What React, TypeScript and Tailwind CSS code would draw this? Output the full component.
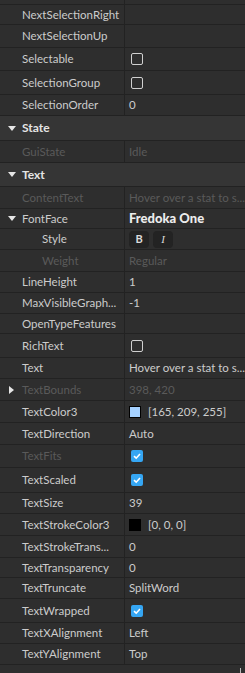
import React from "react";

type Row =
  | { kind: "header"; label: string; h: string }
  | {
      kind: "prop";
      label: string;
      h: string;
      value?: React.ReactNode;
      dim?: boolean;
      indent?: boolean;
      arrow?: "down" | "right";
    };

const Check = ({ on }: { on?: boolean }) =>
  on ? (
    <span className="ml-[2px] flex h-[12px] w-[12px] items-center justify-center rounded-[2px] bg-[#35a6f3]">
      <svg viewBox="0 0 10 10" className="h-[10px] w-[10px]">
        <path d="M2 5.2 L4.2 7.2 L8 3" fill="none" stroke="white" strokeWidth="1.6" />
      </svg>
    </span>
  ) : (
    <span className="ml-[2px] block h-[12px] w-[12px] rounded-[2px] border border-[#d0d0d0]" />
  );

const Swatch = ({ color, text }: { color: string; text: string }) => (
  <span className="flex items-center gap-[7px]">
    <span className={`block h-[12px] w-[12px] border border-black ${color}`} />
    <span>{text}</span>
  </span>
);

const rows: Row[] = [
  { kind: "prop", label: "NextSelectionRight", h: "h-[20px]" },
  { kind: "prop", label: "NextSelectionUp", h: "h-[23px]" },
  { kind: "prop", label: "Selectable", h: "h-[23px]", value: <Check /> },
  { kind: "prop", label: "SelectionGroup", h: "h-[24px]", value: <Check /> },
  { kind: "prop", label: "SelectionOrder", h: "h-[21px]", value: "0" },
  { kind: "header", label: "State", h: "h-[25px]" },
  { kind: "prop", label: "GuiState", h: "h-[22px]", value: "Idle", dim: true },
  { kind: "header", label: "Text", h: "h-[24px]" },
  { kind: "prop", label: "ContentText", h: "h-[22px]", value: "Hover over a stat to s...", dim: true },
  {
    kind: "prop",
    label: "FontFace",
    h: "h-[20px]",
    arrow: "down",
    value: (
      <span className="text-[13px] font-black text-[#ececec] [font-family:'Lato',sans-serif]">
        Fredoka One
      </span>
    ),
  },
  {
    kind: "prop",
    label: "Style",
    h: "h-[21px]",
    indent: true,
    value: (
      <span className="flex gap-[4px]">
        <span className="flex h-[17px] w-[20px] items-center justify-center rounded-[4px] bg-[#232323] text-[11px] font-bold text-[#dcdcdc]">
          B
        </span>
        <span className="flex h-[17px] w-[20px] items-center justify-center rounded-[4px] bg-[#232323] text-[11px] italic text-[#dcdcdc] [font-family:'Liberation_Serif',serif]">
          I
        </span>
      </span>
    ),
  },
  { kind: "prop", label: "Weight", h: "h-[22px]", indent: true, value: "Regular", dim: true },
  { kind: "prop", label: "LineHeight", h: "h-[21px]", value: "1" },
  { kind: "prop", label: "MaxVisibleGraph...", h: "h-[21px]", value: "-1" },
  { kind: "prop", label: "OpenTypeFeatures", h: "h-[20px]" },
  { kind: "prop", label: "RichText", h: "h-[24px]", value: <Check /> },
  { kind: "prop", label: "Text", h: "h-[21px]", value: "Hover over a stat to s..." },
  { kind: "prop", label: "TextBounds", h: "h-[22px]", value: "398, 420", dim: true, arrow: "right" },
  { kind: "prop", label: "TextColor3", h: "h-[22px]", value: <Swatch color="bg-[#a5d1ff]" text="[165, 209, 255]" /> },
  { kind: "prop", label: "TextDirection", h: "h-[22px]", value: "Auto" },
  { kind: "prop", label: "TextFits", h: "h-[23px]", value: <Check on />, dim: true },
  { kind: "prop", label: "TextScaled", h: "h-[25px]", value: <Check on /> },
  { kind: "prop", label: "TextSize", h: "h-[21px]", value: "39" },
  { kind: "prop", label: "TextStrokeColor3", h: "h-[22px]", value: <Swatch color="bg-black" text="[0, 0, 0]" /> },
  { kind: "prop", label: "TextStrokeTrans...", h: "h-[22px]", value: "0" },
  { kind: "prop", label: "TextTransparency", h: "h-[20px]", value: "0" },
  { kind: "prop", label: "TextTruncate", h: "h-[21px]", value: "SplitWord" },
  { kind: "prop", label: "TextWrapped", h: "h-[24px]", value: <Check on /> },
  { kind: "prop", label: "TextXAlignment", h: "h-[21px]", value: "Left" },
  { kind: "prop", label: "TextYAlignment", h: "h-[21px]", value: "Top" },
];

const ArrowDown = () => (
  <svg viewBox="0 0 8 5" className="h-[5px] w-[8px]">
    <path d="M0 0 H8 L4 5 Z" fill="#e6e6e6" />
  </svg>
);

const ArrowRight = () => (
  <svg viewBox="0 0 5 8" className="h-[8px] w-[5px]">
    <path d="M0 0 V8 L5 4 Z" fill="#e6e6e6" />
  </svg>
);

export default function App() {
  return (
    <div className="flex h-[673px] w-[245px] flex-col overflow-hidden bg-[#2e2e2e] text-[11.5px] text-[#cccccc] [font-family:'Lato',sans-serif]">
      <div className="flex h-[5px] shrink-0 border-b border-[#222222]">
        <div className="w-[125px] border-r border-[#222222]" />
      </div>
      {rows.map((r, i) =>
        r.kind === "header" ? (
          <div key={i} className={`flex shrink-0 items-center border-b border-[#222222] bg-[#353535] ${r.h}`}>
            <div className="flex w-[22px] justify-center pl-[1px]">
              <ArrowDown />
            </div>
            <span className="text-[12px] font-bold text-[#e4e4e4]">{r.label}</span>
          </div>
        ) : (
          <div key={i} className={`flex shrink-0 border-b border-[#222222] ${r.h}`}>
            <div className="flex w-[125px] shrink-0 items-center border-r border-[#222222]">
              <div className="flex w-[22px] shrink-0 items-center justify-center pl-[1px]">
                {r.arrow === "down" && <ArrowDown />}
                {r.arrow === "right" && <ArrowRight />}
              </div>
              <span className={`whitespace-nowrap ${r.indent ? "pl-[20px]" : ""} ${r.dim ? "text-[#5a5a5a]" : ""}`}>
                {r.label}
              </span>
            </div>
            <div className={`flex min-w-0 flex-1 items-center pl-[4px] ${r.dim ? "text-[#5a5a5a]" : ""}`}>
              {typeof r.value === "string" ? <span className="whitespace-nowrap">{r.value}</span> : r.value}
            </div>
          </div>
        )
      )}
      <div className="flex flex-1 items-end justify-end">
        <div className="mr-[4px] h-[5px] w-[1px] bg-[#bbbbbb]" />
      </div>
    </div>
  );
}
